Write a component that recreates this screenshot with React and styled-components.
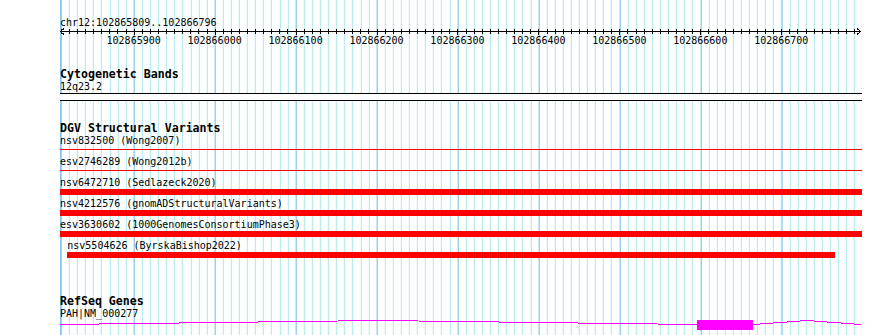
import React from 'react';
import styled, { createGlobalStyle } from 'styled-components';

const START = 102865809;
const END = 102866796;
const SCALE = 0.8095;
const WIDTH = 802;

const toX = (bp) => (bp - START) * SCALE;
const clamp = (x) => Math.max(0, Math.min(WIDTH, x));

const GlobalStyle = createGlobalStyle`
  html, body {
    margin: 0;
    background: #ffffff;
  }
  body {
    font-family: "DejaVu Sans Mono", "Liberation Mono", monospace;
    color: #000000;
  }
`;

const Panel = styled.div`
  margin-left: 60px;
  width: ${WIDTH}px;
  min-height: 100vh;
  padding-top: 16px;
  box-sizing: border-box;
  overflow: hidden;
  background-image:
    repeating-linear-gradient(90deg, #86c6ee 0 1px, transparent 1px ${SCALE * 100}px),
    repeating-linear-gradient(90deg, #a9e9ee 0 1px, transparent 1px ${SCALE * 10}px);
  background-position: ${toX(102865900)}px 0, ${toX(102865810)}px 0;
  box-shadow: inset 1px 0 0 #86c6ee;
`;

const RangeLabel = styled.div`
  font-size: 10px;
  line-height: 13px;
  white-space: pre;
`;

const RulerSvg = styled.svg`
  display: block;
  width: ${WIDTH}px;
  height: 19px;
  overflow: visible;

  text {
    font-family: "DejaVu Sans Mono", "Liberation Mono", monospace;
    font-size: 10px;
    fill: #000000;
  }
`;

const Track = styled.section`
  margin-top: ${(p) => p.$gap}px;
`;

const TrackTitle = styled.h2`
  margin: 0;
  font-size: 11.6px;
  line-height: 11px;
  font-weight: bold;
  white-space: pre;
`;

const FeatureLabel = styled.div`
  font-size: 10px;
  line-height: 13px;
  white-space: pre;
`;

const CytoBand = styled.div`
  height: 8px;
  box-sizing: border-box;
  border-top: 1px solid #000000;
  border-bottom: 1px solid #000000;
  background: #ffffff;
`;

const VariantRow = styled.div`
  height: 21px;
`;

const GlyphLane = styled.div`
  height: 6px;
`;

const VariantBar = styled.div`
  background: #ff0000;
  height: ${(p) => (p.$thick ? 6 : 1)}px;
  margin-top: ${(p) => (p.$thick ? 0 : 2)}px;
`;

const GeneSvg = styled.svg`
  display: block;
  width: ${WIDTH}px;
  height: 10px;
`;

const variants = [
  { name: 'nsv832500', source: 'Wong2007', start: START - 5000, end: END + 5000, thick: false },
  { name: 'esv2746289', source: 'Wong2012b', start: START - 5000, end: END + 5000, thick: false },
  { name: 'nsv6472710', source: 'Sedlazeck2020', start: START - 500, end: END + 500, thick: true },
  { name: 'nsv4212576', source: 'gnomADStructuralVariants', start: START - 500, end: END + 500, thick: true },
  { name: 'esv3630602', source: '1000GenomesConsortiumPhase3', start: START - 500, end: END + 500, thick: true },
  { name: 'nsv5504626', source: 'ByrskaBishop2022', start: 102865818, end: 102866767, thick: true },
];

const Ruler = () => {
  const ticks = [];
  for (let bp = Math.ceil(START / 10) * 10; bp <= END; bp += 10) {
    const x = Math.round(toX(bp)) + 0.5;
    const major = bp % 100 === 0;
    ticks.push(
      <line key={bp} x1={x} x2={x} y1={major ? -0.5 : 0} y2={major ? 6 : 5} stroke="#000" />
    );
    if (major) {
      ticks.push(
        <text key={`t${bp}`} x={toX(bp)} y={15} textAnchor="middle">{bp}</text>
      );
    }
  }
  return (
    <RulerSvg viewBox={`0 0 ${WIDTH} 19`} shapeRendering="crispEdges">
      <line x1={0} x2={WIDTH - 1} y1={2.5} y2={2.5} stroke="#000" />
      <polyline points="4,-0.5 0.5,2.5 4,5.5" fill="none" stroke="#000" />
      <polyline points={`${WIDTH - 5},-0.5 ${WIDTH - 1.5},2.5 ${WIDTH - 5},5.5`} fill="none" stroke="#000" />
      {ticks}
    </RulerSvg>
  );
};

const Variant = ({ name, source, start, end, thick }) => {
  const left = clamp(toX(start));
  const right = clamp(toX(end));
  return (
    <VariantRow>
      <FeatureLabel style={{ marginLeft: left }}>{`${name} (${source})`}</FeatureLabel>
      <GlyphLane>
        <VariantBar $thick={thick} style={{ marginLeft: left, width: right - left }} />
      </GlyphLane>
    </VariantRow>
  );
};

// PAH exon inside the view; introns run off both edges
const Gene = () => {
  const exonStart = Math.round(toX(102866596));
  const exonEnd = Math.round(toX(102866665));
  return (
    <GeneSvg viewBox={`0 0 ${WIDTH} 10`} shapeRendering="crispEdges">
      <polyline
        points={`0,4.5 318,0.5 ${exonStart},4.5`}
        fill="none"
        stroke="#ff00ff"
      />
      <rect x={exonStart} y={0} width={exonEnd - exonStart} height={10} fill="#ff00ff" />
      <polyline
        points={`${exonEnd},4.5 747,0.5 ${WIDTH - 1},4.5`}
        fill="none"
        stroke="#ff00ff"
      />
    </GeneSvg>
  );
};

const App = () => {
  return (
    <>
      <GlobalStyle />
      <Panel>
        <RangeLabel>{`chr12:${START}..${END}`}</RangeLabel>
        <Ruler />

        <Track $gap={21}>
          <TrackTitle>Cytogenetic Bands</TrackTitle>
          <FeatureLabel>12q23.2</FeatureLabel>
          <CytoBand />
        </Track>

        <Track $gap={22}>
          <TrackTitle>DGV Structural Variants</TrackTitle>
          {variants.map((v) => (
            <Variant key={v.name} {...v} />
          ))}
        </Track>

        <Track $gap={36}>
          <TrackTitle>RefSeq Genes</TrackTitle>
          <FeatureLabel>PAH|NM_000277</FeatureLabel>
          <Gene />
        </Track>
      </Panel>
    </>
  );
};

export default App;
